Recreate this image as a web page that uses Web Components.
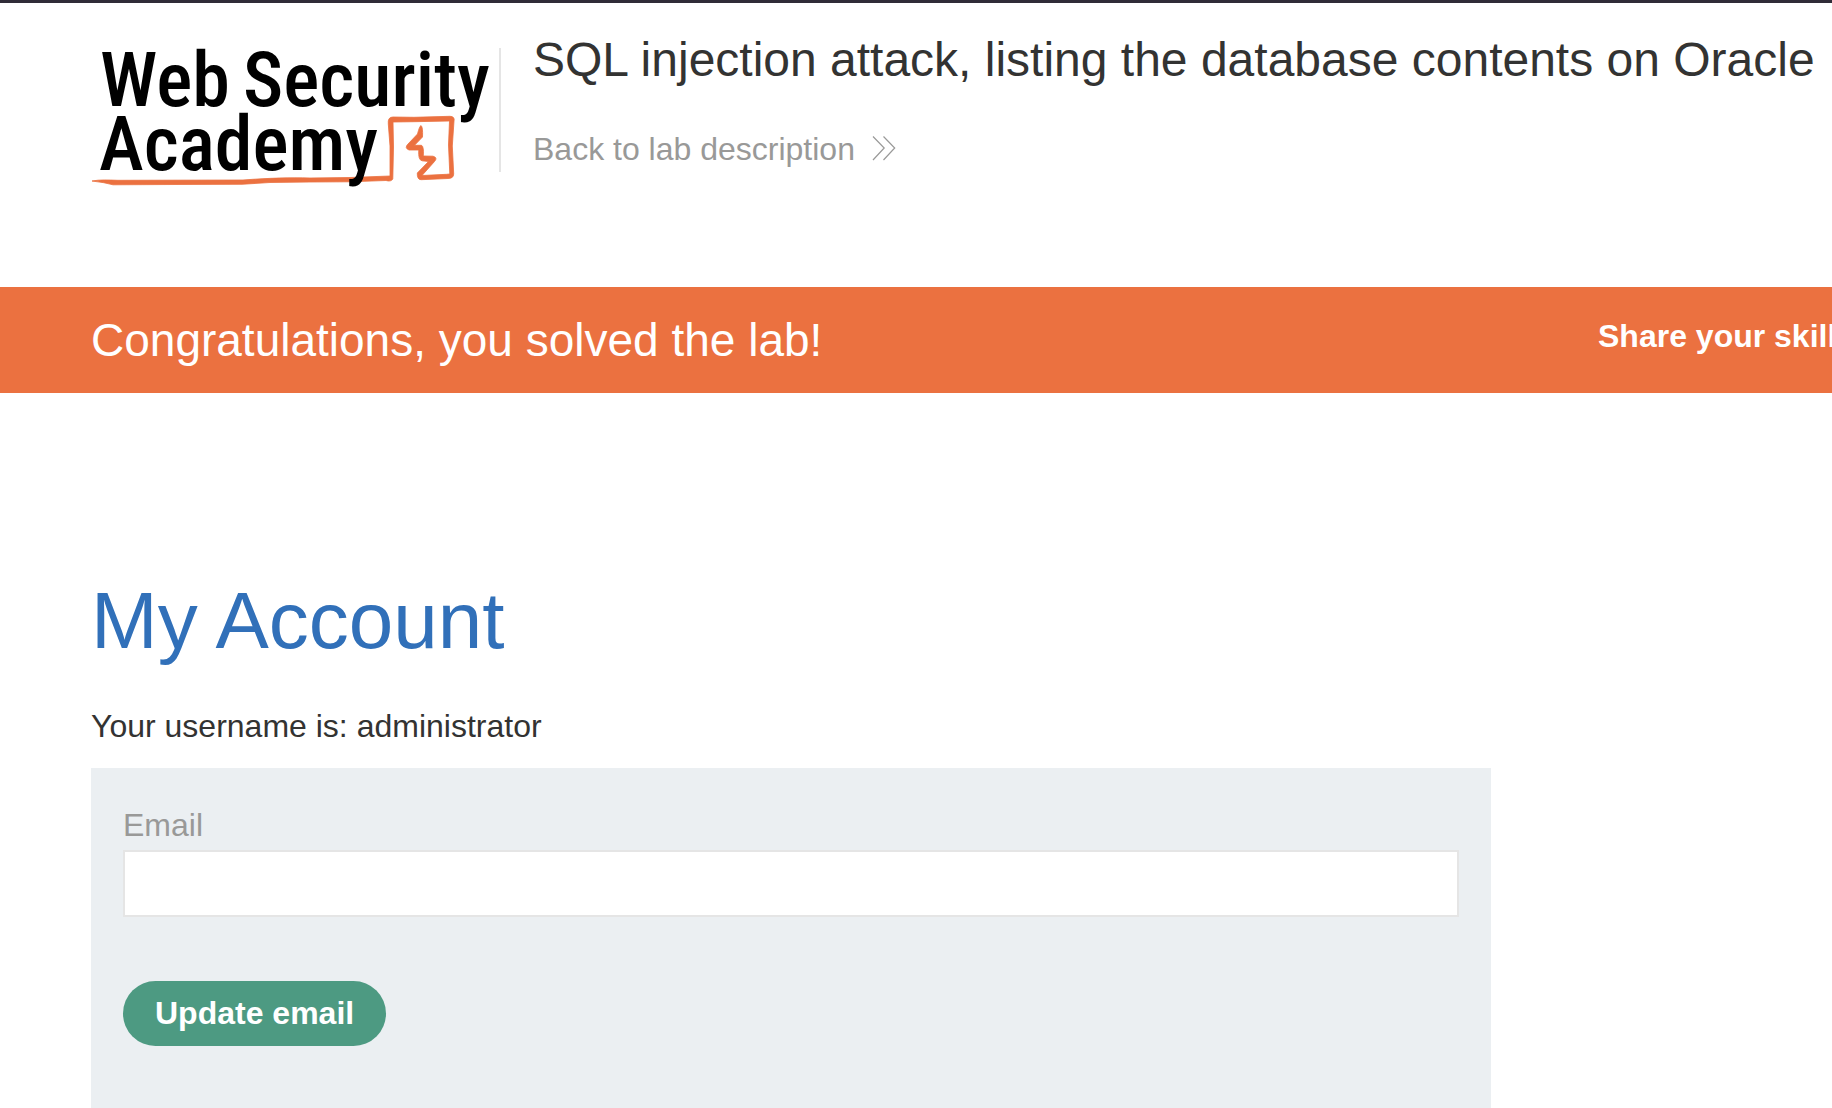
<!DOCTYPE html>
<html lang="en">
<head>
<meta charset="utf-8">
<title>SQL injection attack, listing the database contents on Oracle</title>
<style>
  body {
    margin: 0;
    background: #fff;
    color: #333332;
    font: 32px/36px "Liberation Sans", Arial, sans-serif;
  }
</style>
</head>
<body>
<lab-page>
  <lab-header slot="header">
    <academy-logo slot="logo"></academy-logo>
    <span slot="title">SQL injection attack, listing the database contents on Oracle</span>
    <span slot="back">Back to lab description</span>
  </lab-header>
  <lab-banner slot="banner">Congratulations, you solved the lab!<span slot="share">Share your skill</span></lab-banner>
  <account-panel>
    <span slot="heading">My Account</span>
    <span slot="user">Your username is: administrator</span>
    <email-form></email-form>
  </account-panel>
</lab-page>
<script>
  const component = (name, html) => customElements.define(name, class extends HTMLElement {
    constructor() {
      super();
      this.attachShadow({ mode: "open" }).innerHTML = html;
    }
  });

  component("lab-page", `
    <style>
      :host { display: flex; flex-direction: column; min-height: 100vh; box-sizing: border-box; border-top: 3px solid #302c38; --gutter: 91px; }
      main { flex: 1; display: flex; }
    </style>
    <slot name="header"></slot>
    <slot name="banner"></slot>
    <main><slot></slot></main>`);

  component("lab-header", `
    <style>
      :host { display: block; }
      header { display: flex; align-items: flex-start; padding: 29px 0 97px var(--gutter); }
      .logo { flex: none; margin-top: 12px; }
      .text { flex: 1; display: flex; align-items: flex-start; }
      .rule { flex: none; width: 2px; height: 124px; margin: 16px 32px 0 0; background: #e5e5e5; }
      h1 { margin: 0 0 43px; font-size: 48px; line-height: 56px; font-weight: 400; white-space: nowrap; }
      a { display: inline-flex; align-items: center; gap: 17px; color: #999998; text-decoration: none; }
      svg { display: block; }
    </style>
    <header>
      <div class="logo"><slot name="logo"></slot></div>
      <div class="text">
        <div class="rule"></div>
        <div>
          <h1><slot name="title"></slot></h1>
          <a href="#"><slot name="back"></slot>
            <svg width="24" height="26" viewBox="0 0 24 26" fill="none" stroke="#999998" stroke-width="1.2" aria-hidden="true"><path d="M1 .5 L12.2 12 L1 24 M11.500 .5 L22.700 12 L11.500 24"/></svg>
          </a>
        </div>
      </div>
    </header>`);

  component("academy-logo", `
    <style>
      :host { display: block; }
      svg { display: block; overflow: visible; }
      text { font: 500 76px "Roboto Condensed", sans-serif; fill: #000; }
    </style>
    <svg width="408" height="146" viewBox="91 44 408 146" role="img" aria-label="Web Security Academy">
      <g fill="#eb7140">
        <path fill-rule="evenodd" d="M92 181 C100 179.500 108 180 118 180.300 L243 180 C270 178 290 177.500 310 178 L350 177.500 L390 176 L390 146 L388.300 124 Q387.500 117 393 117 L414 117.300 L450 116.300 Q455 116.500 454 121 L452.300 146 L453.700 174 Q453.500 178.500 448 178.500 L421 179.700 Q417 179.500 417.300 173 L428.500 161.500 L422 160.800 Q418 160 418.800 150 L409 150 Q404 148 408 144 L417.500 134 Q419.500 126 421 125.500 Q423 127 422.500 137 L414.500 145.300 L421.500 145.300 Q424 146.500 423.300 156 L433 156.200 Q438 157.500 434.500 161.500 L422 175.500 L446.500 174.300 L449.800 174 L448.500 145 L449.500 121 L415 121.700 L393 122 L393.500 147 L392.800 179 Q391 182 386 180.500 L350 181.800 L310 182 L270 182.500 L242 184.300 L175 184.500 L113 184.800 Q105 182.500 92 181 Z" stroke="#eb7140" stroke-width=".8" stroke-linejoin="round"/>
      </g>
      <text><tspan x="100" y="106">Web</tspan><tspan x="243" y="106">Security</tspan><tspan x="99" y="170">Academy</tspan></text>
    </svg>`);

  component("lab-banner", `
    <style>
      :host { display: block; background: #eb7140; color: #fff; }
      section { display: flex; justify-content: space-between; padding: 27px 0 27px var(--gutter); overflow: hidden; white-space: nowrap; }
      p { margin: 0; font-size: 46px; line-height: 52px; }
      a { flex: 0 0 234px; min-width: 0; padding-top: 4px; color: inherit; font-weight: 700; text-decoration: none; }
    </style>
    <section>
      <p><slot></slot></p>
      <a href="#"><slot name="share"></slot></a>
    </section>`);

  component("account-panel", `
    <style>
      :host { flex: 1; display: flex; flex-direction: column; padding: 182px var(--gutter) 0; }
      h1 { margin: 0 0 41px; font-size: 80px; line-height: 92px; font-weight: 400; color: #3170b9; }
      p { margin: 0 0 24px; }
    </style>
    <h1><slot name="heading"></slot></h1>
    <p><slot name="user"></slot></p>
    <slot></slot>`);

  component("email-form", `
    <style>
      :host { flex: 1; display: block; max-width: 1400px; background: #ebeff2; }
      form { display: flex; flex-direction: column; align-items: flex-start; padding: 39px 32px 32px; }
      label { color: #999998; margin-bottom: 7px; }
      input { width: 100%; height: 67px; box-sizing: border-box; margin: 0 0 64px; padding: 0 16px; border: 2px solid #e5e5e5; border-radius: 0; background: #fff; color: inherit; font: inherit; }
      button { padding: 14px 32px 15px; border: 0; border-radius: 33px; background: #4d9a82; color: #fff; font: inherit; font-weight: 700; }
    </style>
    <form>
      <label for="email">Email</label>
      <input id="email" type="email" name="email">
      <button type="button">Update email</button>
    </form>`);
</script>
</body>
</html>
